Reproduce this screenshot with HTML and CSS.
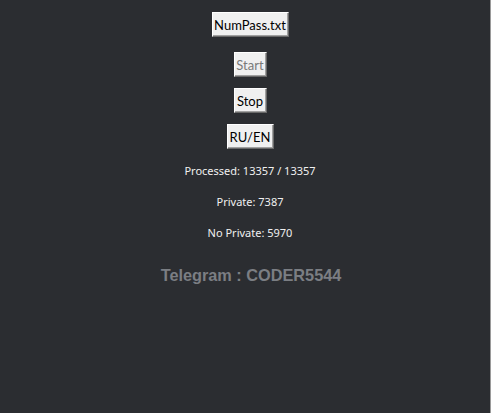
FILE: index.html
```html
<!DOCTYPE html>
<html lang="en">
<head>
  <meta charset="UTF-8" />
  <meta name="viewport" content="width=device-width, initial-scale=1.0">
  <title>NumPass</title>
  <link rel="stylesheet" href="styles.css">
</head>
<body>
  <div class="window">
    <button class="btn btn-file">NumPass.txt</button>
    <button class="btn btn-start" disabled>Start</button>
    <button class="btn btn-stop">Stop</button>
    <button class="btn btn-lang">RU/EN</button>

    <div class="stat stat-first">Processed: 13357 / 13357</div>
    <div class="stat">Private: 7387</div>
    <div class="stat">No Private: 5970</div>

    <div class="telegram">Telegram : CODER5544</div>
  </div>
</body>
</html>
```

FILE: styles.css
```css
:root {
  --bg: #2b2d31;
  --btn: #f0f0f0;
  --text: #f0f0f0;
  --muted: #7b7e83;
}

* {
  margin: 0;
  padding: 0;
  box-sizing: border-box;
}

html, body {
  height: 100%;
}

body {
  background: var(--bg);
  font-family: Lato, 'Noto Sans', sans-serif;
  font-size: 12px;
}

.window {
  height: 100%;
  display: flex;
  flex-direction: column;
  align-items: center;
  padding-top: 12px;
  padding-left: 10px;
  border-right: 1px solid #9a9a9a;
}

.btn {
  height: 25px;
  padding: 0;
  background: var(--btn);
  color: #000;
  font-family: inherit;
  font-size: 13px;
  border: 1px solid;
  border-color: #ffffff #696969 #696969 #ffffff;
  box-shadow: inset -1px -1px 0 #a0a0a0;
  cursor: pointer;
}

.btn:disabled {
  color: #7a7a7a;
  cursor: default;
}

.btn-file {
  width: 77px;
}

.btn-start {
  width: 33px;
  margin-top: 15px;
}

.btn-stop {
  width: 33px;
  margin-top: 11px;
}

.btn-lang {
  width: 47px;
  margin-top: 11px;
}

.stat {
  color: var(--text);
  font-family: 'Noto Sans', sans-serif;
  font-size: 11px;
  line-height: 15px;
  margin-top: 16px;
}

.stat-first {
  margin-top: 14px;
}

.telegram {
  margin-top: 26px;
  color: var(--muted);
  font-family: 'Liberation Sans', Arial, sans-serif;
  font-weight: bold;
  font-size: 16.3px;
  line-height: 19px;
  padding-left: 2px;
}
```
